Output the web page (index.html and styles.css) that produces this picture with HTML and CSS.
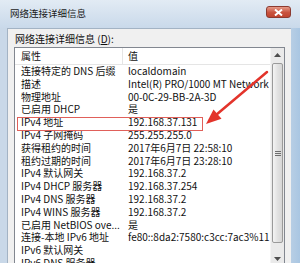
FILE: index.html
```html
<!DOCTYPE html>
<html lang="zh-CN">
  <head>
    <meta charset="UTF-8" />
    <meta name="viewport" content="width=device-width, initial-scale=1.0" />
    <title>网络连接详细信息</title>
    <link rel="stylesheet" href="styles.css">
  </head>
  <body>
    <div class="window">
      <div class="titlebar">
        <span class="title">网络连接详细信息</span>
        <span class="close">
          <svg width="9" height="7" viewBox="0 0 9 7">
            <path d="M1 0.5 L8 6.5 M8 0.5 L1 6.5" stroke="#fff" stroke-width="2"/>
          </svg>
        </span>
      </div>

      <div class="client">
        <div class="caption">网络连接详细信息 (<u>D</u>):</div>

        <div class="list">
          <div class="table">
            <div class="head">
              <div class="name">属性</div>
              <div class="value">值</div>
            </div>
            <div class="row"><div class="name">连接特定的 DNS 后缀</div><div class="value">localdomain</div></div>
            <div class="row"><div class="name">描述</div><div class="value">Intel(R) PRO/1000 MT Network Connection</div></div>
            <div class="row"><div class="name">物理地址</div><div class="value">00-0C-29-BB-2A-3D</div></div>
            <div class="row"><div class="name">已启用 DHCP</div><div class="value">是</div></div>
            <div class="row marked"><div class="name">IPv4 地址</div><div class="value">192.168.37.131</div></div>
            <div class="row"><div class="name">IPv4 子网掩码</div><div class="value">255.255.255.0</div></div>
            <div class="row"><div class="name">获得租约的时间</div><div class="value">2017年6月7日 22:58:10</div></div>
            <div class="row"><div class="name">租约过期的时间</div><div class="value">2017年6月7日 23:28:10</div></div>
            <div class="row"><div class="name">IPv4 默认网关</div><div class="value">192.168.37.2</div></div>
            <div class="row"><div class="name">IPv4 DHCP 服务器</div><div class="value">192.168.37.254</div></div>
            <div class="row"><div class="name">IPv4 DNS 服务器</div><div class="value">192.168.37.2</div></div>
            <div class="row"><div class="name">IPv4 WINS 服务器</div><div class="value">192.168.37.2</div></div>
            <div class="row"><div class="name">已启用 NetBIOS ove...</div><div class="value">是</div></div>
            <div class="row"><div class="name">连接-本地 IPv6 地址</div><div class="value">fe80::8da2:7580:c3cc:7ac3%11</div></div>
            <div class="row"><div class="name">IPv6 默认网关</div><div class="value"></div></div>
            <div class="row"><div class="name">IPv6 DNS 服务器</div><div class="value"></div></div>
          </div>

          <div class="scrollbar">
            <div class="sb-btn">
              <svg width="7" height="4" viewBox="0 0 7 4"><path d="M0 4 L3.5 0 L7 4 Z" fill="#4d4d4d"/></svg>
            </div>
            <div class="sb-track">
              <div class="sb-thumb">
                <span class="grip"></span>
                <span class="grip"></span>
                <span class="grip"></span>
              </div>
            </div>
            <div class="sb-btn">
              <svg width="7" height="4" viewBox="0 0 7 4"><path d="M0 0 L3.5 4 L7 0 Z" fill="#4d4d4d"/></svg>
            </div>
          </div>
        </div>
      </div>

      <!-- red annotation arrow -->
      <svg class="arrow" width="300" height="263" viewBox="0 0 300 263">
        <line x1="267" y1="72" x2="216" y2="115" stroke="#e3342b" stroke-width="2.5" stroke-linecap="round"/>
        <polygon points="206,124 221.5,118.8 213.5,109.6" fill="#e3342b"/>
      </svg>
    </div>
  </body>
</html>
```

FILE: styles.css
```css
* {
  margin: 0;
  padding: 0;
  box-sizing: border-box;
}

html, body {
  width: 300px;
  height: 263px;
  overflow: hidden;
}

body {
  font-family: "Noto Sans CJK SC", "Noto Sans", sans-serif;
  font-size: 10px;
  color: #111;
  background: #c6d6e8;
}

.window {
  position: relative;
  height: 263px;
  display: flex;
  flex-direction: column;
  background: linear-gradient(to right, #c9d8e8 0, #c9d8e8 280px, #a9c6e2 300px);
}

.titlebar {
  height: 28px;
  display: flex;
  align-items: center;
  justify-content: space-between;
  padding: 0 9px 2px 10px;
  background: linear-gradient(#e2ebf4, #c9d9ea);
}

.title {
  font-size: 9.5px;
  color: #1a1a1a;
}

.close {
  width: 25px;
  height: 12px;
  margin-top: -2px;
  display: flex;
  align-items: center;
  justify-content: center;
  border: 1px solid #8c3a30;
  border-radius: 3px;
  background: linear-gradient(#e59a88, #c9533f 55%, #c0442f);
}

.client {
  flex: 1;
  margin: 0 9px 0 7px;
  background: #f0f0f0;
  border-top: 1px solid #a3b3c4;
  border-left: 1px solid #a3b3c4;
  overflow: hidden;
}

.caption {
  padding: 3px 0 0 7px;
  line-height: 14px;
  height: 18px;
}

.list {
  margin-left: 6px;
  width: 271px;
  height: 220px;
  display: flex;
  background: #fff;
  border: 1px solid #828790;
}

.table {
  flex: 1;
  overflow: hidden;
}

.head {
  display: flex;
  height: 17px;
  line-height: 16px;
  border-bottom: 1px solid #e5e5e5;
}

.head .name {
  border-right: 1px solid #e5e5e5;
}

.row {
  display: flex;
  height: 12.8px;
  line-height: 12.8px;
}

.name {
  flex: none;
  width: 108px;
  padding-left: 6px;
  white-space: nowrap;
}

.value {
  padding-left: 5px;
  white-space: nowrap;
}

.marked {
  position: relative;
}

.marked::after {
  content: "";
  position: absolute;
  left: 2px;
  top: 0.8px;
  width: 184px;
  height: 12.5px;
  border: 1px solid #e0605a;
}

.scrollbar {
  flex: none;
  width: 14px;
  display: flex;
  flex-direction: column;
  background: #eaeaea;
  border-left: 1px solid #f4f4f4;
}

.sb-btn {
  height: 14px;
  display: flex;
  align-items: center;
  justify-content: center;
}

.sb-track {
  flex: 1;
  padding: 1px 1px 0 1px;
}

.sb-thumb {
  height: 180px;
  display: flex;
  flex-direction: column;
  align-items: center;
  justify-content: center;
  gap: 1px;
  border: 1px solid #9a9a9a;
  border-radius: 2px;
  background: linear-gradient(to right, #f4f4f4, #e2e2e2 50%, #d6d6d6);
}

.grip {
  width: 6px;
  height: 1px;
  background: #6e6e6e;
}

.arrow {
  position: absolute;
  left: 0;
  top: 0;
  pointer-events: none;
}
```
